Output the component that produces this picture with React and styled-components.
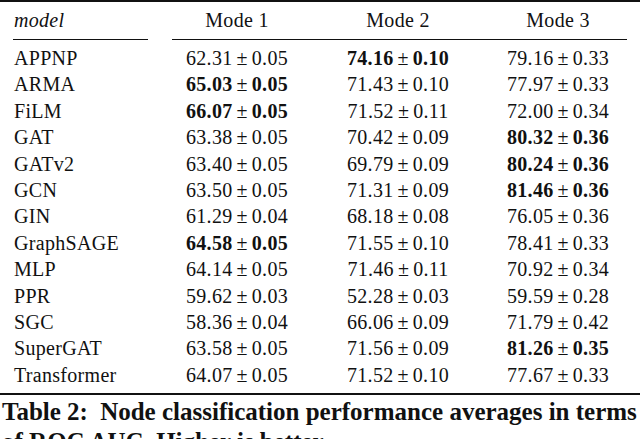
import React from "react";
import styled, { createGlobalStyle } from "styled-components";

const Global = createGlobalStyle`
  html, body { margin: 0; padding: 0; background: #fff; }
  body { font-family: "Liberation Serif", "DejaVu Serif", serif; color: #111; overflow: hidden; }
`;

const COLS = "160px 154px 168px 152px";

const Page = styled.div`
  width: 640px;
  height: 439px;
  overflow: hidden;
`;

const Table = styled.div`
  width: 640px;
  border-top: 2px solid #111;
  border-bottom: 2px solid #111;
`;

const HeaderRow = styled.div`
  display: grid;
  grid-template-columns: ${COLS};
  padding: 5px 0 5.6px;
  font-size: 20px;
  line-height: 26.4px;
  letter-spacing: 0.3px;
`;

const ModelHead = styled.div`
  font-style: italic;
  padding-left: 14px;
`;

const ModeHead = styled.div`
  text-align: center;
`;

const MidRule = styled.div`
  display: grid;
  grid-template-columns: 160px 474px;
  height: 1px;
`;

const RuleSeg = styled.div`
  height: 1px;
  background: #111;
  margin: ${(p) => p.$margin};
`;

const Body = styled.div`
  padding: 5px 0 4.8px;
`;

const Row = styled.div`
  display: grid;
  grid-template-columns: ${COLS};
  font-size: 20px;
  line-height: 26.4px;
  letter-spacing: 0.3px;
  white-space: nowrap;
`;

const ModelCell = styled.div`
  padding-left: 14px;
`;

const ValueCell = styled.div`
  text-align: center;
`;

const Num = styled.span`
  font-weight: ${(p) => (p.$bold ? 700 : 400)};
`;

const Pm = styled.span`
  margin: 0 4px;
`;

const Caption = styled.div`
  margin-top: 1.6px;
  padding-left: 2px;
  font-size: 25px;
  line-height: 30px;
  font-weight: 700;
  white-space: nowrap;
`;

const CapGap = styled.span`
  display: inline-block;
  width: 6px;
`;

const rows = [
  ["APPNP", ["62.31", "0.05", 0], ["74.16", "0.10", 1], ["79.16", "0.33", 0]],
  ["ARMA", ["65.03", "0.05", 1], ["71.43", "0.10", 0], ["77.97", "0.33", 0]],
  ["FiLM", ["66.07", "0.05", 1], ["71.52", "0.11", 0], ["72.00", "0.34", 0]],
  ["GAT", ["63.38", "0.05", 0], ["70.42", "0.09", 0], ["80.32", "0.36", 1]],
  ["GATv2", ["63.40", "0.05", 0], ["69.79", "0.09", 0], ["80.24", "0.36", 1]],
  ["GCN", ["63.50", "0.05", 0], ["71.31", "0.09", 0], ["81.46", "0.36", 1]],
  ["GIN", ["61.29", "0.04", 0], ["68.18", "0.08", 0], ["76.05", "0.36", 0]],
  ["GraphSAGE", ["64.58", "0.05", 1], ["71.55", "0.10", 0], ["78.41", "0.33", 0]],
  ["MLP", ["64.14", "0.05", 0], ["71.46", "0.11", 0], ["70.92", "0.34", 0]],
  ["PPR", ["59.62", "0.03", 0], ["52.28", "0.03", 0], ["59.59", "0.28", 0]],
  ["SGC", ["58.36", "0.04", 0], ["66.06", "0.09", 0], ["71.79", "0.42", 0]],
  ["SuperGAT", ["63.58", "0.05", 0], ["71.56", "0.09", 0], ["81.26", "0.35", 1]],
  ["Transformer", ["64.07", "0.05", 0], ["71.52", "0.10", 0], ["77.67", "0.33", 0]],
];

function Value({ v }) {
  const [m, s, b] = v;
  return (
    <ValueCell>
      <Num $bold={!!b}>{m}</Num>
      <Pm>±</Pm>
      <Num $bold={!!b}>{s}</Num>
    </ValueCell>
  );
}

export default function App() {
  return (
    <Page>
      <Global />
      <Table>
        <HeaderRow>
          <ModelHead>model</ModelHead>
          <ModeHead>Mode 1</ModeHead>
          <ModeHead>Mode 2</ModeHead>
          <ModeHead>Mode 3</ModeHead>
        </HeaderRow>
        <MidRule>
          <RuleSeg $margin="0 12px 0 13px" />
          <RuleSeg $margin="0 7px 0 12px" />
        </MidRule>
        <Body>
          {rows.map(([name, a, b, c]) => (
            <Row key={name}>
              <ModelCell>{name}</ModelCell>
              <Value v={a} />
              <Value v={b} />
              <Value v={c} />
            </Row>
          ))}
        </Body>
      </Table>
      <Caption>
        Table 2:<CapGap /> Node classification performance averages in terms
        <br />
        of ROC AUC. Higher is better.
      </Caption>
    </Page>
  );
}
